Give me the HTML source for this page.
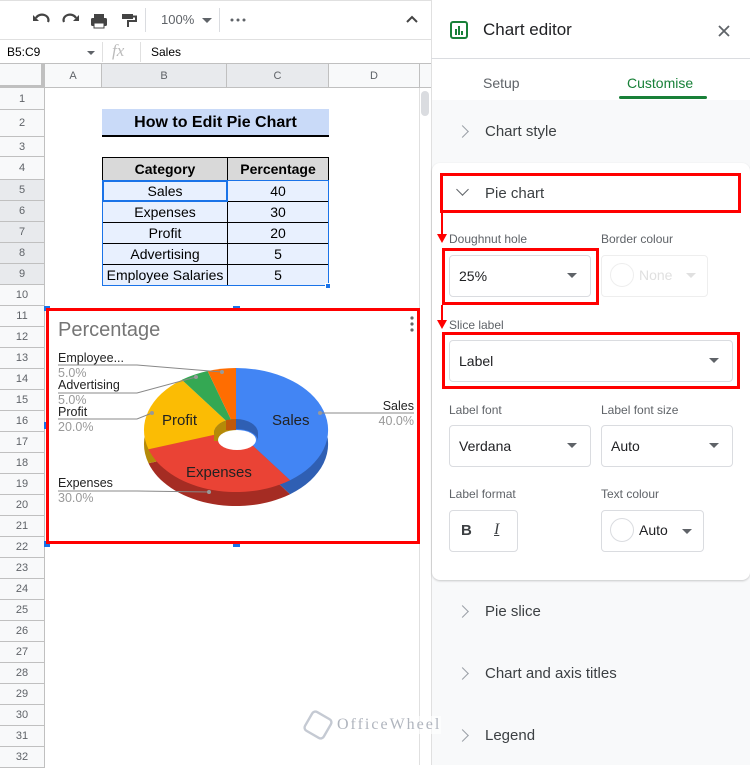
<!DOCTYPE html>
<html><head><meta charset="utf-8"><style>
*{margin:0;padding:0;box-sizing:border-box}
body{width:750px;height:765px;overflow:hidden;background:#fff;font-family:"Liberation Sans",Arial,sans-serif;position:relative}
.a{position:absolute}
.rh{position:absolute;left:0;width:45px;background:#f8f9fa;border-bottom:1px solid #c0c0c0;border-right:1px solid #c0c0c0;color:#5f6368;font-size:11px;text-align:center}
.cell{position:absolute;border:1px solid #000;font-size:14px;text-align:center;line-height:20px;background:#e8f0fe;color:#000}
.lbl{position:absolute;font-size:12px;color:#5f6368}
.box{position:absolute;border:1px solid #dadce0;border-radius:4px;background:#fff;font-size:14px;color:#202124;padding-left:9px}
.dd{position:absolute;width:0;height:0;border-left:5px solid transparent;border-right:5px solid transparent;border-top:5px solid #5f6368}
.sec{position:absolute;left:485px;font-size:15px;color:#3c4043}
.chev{position:absolute;left:458px;width:9px;height:9px;border-right:1.5px solid #9aa0a6;border-top:1.5px solid #9aa0a6;transform:rotate(45deg)}
.red{position:absolute;border:3px solid #f00}
</style></head><body>
<!-- toolbar -->
<div class="a" style="left:0;top:0;width:431px;height:40px;border-bottom:1px solid #e0e0e0;border-top:1px solid #e0e0e0"></div>
<svg class="a" style="left:30px;top:10px" width="120" height="20" viewBox="0 0 120 20">
<path d="M6 8 A6 5 0 0 1 18 12" fill="none" stroke="#444" stroke-width="2.2"/><path d="M3 5 L3 11 L9 11 Z" fill="#444"/>
<path d="M46 8 A6 5 0 0 0 34 12" fill="none" stroke="#444" stroke-width="2.2"/><path d="M49 5 L49 11 L43 11 Z" fill="#444"/>
<rect x="61" y="8" width="16" height="8" rx="1.5" fill="#444"/><rect x="64" y="4" width="10" height="4" fill="#444"/><rect x="64" y="13" width="10" height="5" fill="#fff" stroke="#444" stroke-width="1"/>
<rect x="92" y="4" width="11" height="5" fill="#444"/><path d="M103 6.5 H106 V11 H98 V17" fill="none" stroke="#444" stroke-width="2"/>
</svg>
<div class="a" style="left:145px;top:8px;width:1px;height:24px;background:#dadce0"></div>
<div class="a" style="left:161px;top:12px;font-size:13px;color:#5f6368">100%</div>
<div class="dd" style="left:202px;top:18px"></div>
<div class="a" style="left:219px;top:8px;width:1px;height:24px;background:#dadce0"></div>
<svg class="a" style="left:230px;top:18px" width="16" height="4"><circle cx="2" cy="2" r="1.5" fill="#5f6368"/><circle cx="8" cy="2" r="1.5" fill="#5f6368"/><circle cx="14" cy="2" r="1.5" fill="#5f6368"/></svg>
<svg class="a" style="left:405px;top:14px" width="14" height="10"><path d="M2 8 L7 3 L12 8" fill="none" stroke="#444" stroke-width="2"/></svg>
<!-- formula bar -->
<div class="a" style="left:0;top:40px;width:431px;height:24px;border-bottom:1px solid #c0c0c0"></div>
<div class="a" style="left:7px;top:45px;font-size:12px;color:#000">B5:C9</div>
<div class="dd" style="left:87px;top:51px;border-width:4px 4px 0 4px"></div>
<div class="a" style="left:102px;top:42px;width:1px;height:20px;background:#e0e0e0"></div>
<div class="a" style="left:112px;top:41px;font-size:17px;color:#bbb;font-style:italic;font-family:'Liberation Serif',serif">fx</div>
<div class="a" style="left:140px;top:42px;width:1px;height:20px;background:#e0e0e0"></div>
<div class="a" style="left:151px;top:45px;font-size:12px;color:#000">Sales</div>
<!-- column headers -->
<div class="a" style="left:0;top:64px;width:45px;height:25px;background:#f8f9fa;border-right:4px solid #c0c0c0;border-bottom:4px solid #c0c0c0"></div>
<div class="a" style="left:45px;top:64px;width:57px;height:24px;background:#f8f9fa;border-right:1px solid #c0c0c0;border-bottom:1px solid #c0c0c0;font-size:11px;color:#5f6368;text-align:center;line-height:24px">A</div>
<div class="a" style="left:102px;top:64px;width:125px;height:24px;background:#e8eaed;border-right:1px solid #c0c0c0;border-bottom:1px solid #c0c0c0;font-size:11px;color:#5f6368;text-align:center;line-height:24px">B</div>
<div class="a" style="left:227px;top:64px;width:102px;height:24px;background:#e8eaed;border-right:1px solid #c0c0c0;border-bottom:1px solid #c0c0c0;font-size:11px;color:#5f6368;text-align:center;line-height:24px">C</div>
<div class="a" style="left:329px;top:64px;width:91px;height:24px;background:#f8f9fa;border-right:1px solid #c0c0c0;border-bottom:1px solid #c0c0c0;font-size:11px;color:#5f6368;text-align:center;line-height:24px">D</div>
<div class="a" style="left:420px;top:64px;width:11px;height:24px;background:#f8f9fa;border-bottom:1px solid #c0c0c0"></div>
<!-- scrollbar -->
<div class="a" style="left:419px;top:88px;width:1px;height:677px;background:#e0e0e0"></div>
<div class="a" style="left:421px;top:91px;width:8px;height:25px;border-radius:4px;background:#dadce0"></div>
<!-- row headers -->
<div class="rh" style="top:88px;height:22px;line-height:22px">1</div>
<div class="rh" style="top:110px;height:27px;line-height:27px">2</div>
<div class="rh" style="top:137px;height:20px;line-height:20px">3</div>
<div class="rh" style="top:157px;height:23px;line-height:23px">4</div>
<div class="rh" style="top:180px;height:21px;line-height:21px;background:#e8eaed">5</div>
<div class="rh" style="top:201px;height:21px;line-height:21px;background:#e8eaed">6</div>
<div class="rh" style="top:222px;height:21px;line-height:21px;background:#e8eaed">7</div>
<div class="rh" style="top:243px;height:21px;line-height:21px;background:#e8eaed">8</div>
<div class="rh" style="top:264px;height:21px;line-height:21px;background:#e8eaed">9</div>
<div class="rh" style="top:285px;height:21px;line-height:21px">10</div>
<div class="rh" style="top:306px;height:21px;line-height:21px">11</div>
<div class="rh" style="top:327px;height:21px;line-height:21px">12</div>
<div class="rh" style="top:348px;height:21px;line-height:21px">13</div>
<div class="rh" style="top:369px;height:21px;line-height:21px">14</div>
<div class="rh" style="top:390px;height:21px;line-height:21px">15</div>
<div class="rh" style="top:411px;height:21px;line-height:21px">16</div>
<div class="rh" style="top:432px;height:21px;line-height:21px">17</div>
<div class="rh" style="top:453px;height:21px;line-height:21px">18</div>
<div class="rh" style="top:474px;height:21px;line-height:21px">19</div>
<div class="rh" style="top:495px;height:21px;line-height:21px">20</div>
<div class="rh" style="top:516px;height:21px;line-height:21px">21</div>
<div class="rh" style="top:537px;height:21px;line-height:21px">22</div>
<div class="rh" style="top:558px;height:21px;line-height:21px">23</div>
<div class="rh" style="top:579px;height:21px;line-height:21px">24</div>
<div class="rh" style="top:600px;height:21px;line-height:21px">25</div>
<div class="rh" style="top:621px;height:21px;line-height:21px">26</div>
<div class="rh" style="top:642px;height:21px;line-height:21px">27</div>
<div class="rh" style="top:663px;height:21px;line-height:21px">28</div>
<div class="rh" style="top:684px;height:21px;line-height:21px">29</div>
<div class="rh" style="top:705px;height:21px;line-height:21px">30</div>
<div class="rh" style="top:726px;height:21px;line-height:21px">31</div>
<div class="rh" style="top:747px;height:21px;line-height:21px">32</div>
<!-- title -->
<div class="a" style="left:102px;top:109px;width:227px;height:28px;background:#c9daf8;border-bottom:2px solid #000;font-size:16px;font-weight:bold;text-align:center;line-height:27px">How to Edit Pie Chart</div>
<!-- table -->
<div class="cell" style="left:102px;top:157px;width:126px;height:24px;line-height:22px;background:#d9d9d9;font-weight:bold">Category</div>
<div class="cell" style="left:227px;top:157px;width:102px;height:24px;line-height:22px;background:#d9d9d9;font-weight:bold">Percentage</div>
<div class="cell" style="left:102px;top:180px;width:126px;height:22px">Sales</div><div class="cell" style="left:227px;top:180px;width:102px;height:22px">40</div>
<div class="cell" style="left:102px;top:201px;width:126px;height:22px">Expenses</div><div class="cell" style="left:227px;top:201px;width:102px;height:22px">30</div>
<div class="cell" style="left:102px;top:222px;width:126px;height:22px">Profit</div><div class="cell" style="left:227px;top:222px;width:102px;height:22px">20</div>
<div class="cell" style="left:102px;top:243px;width:126px;height:22px">Advertising</div><div class="cell" style="left:227px;top:243px;width:102px;height:22px">5</div>
<div class="cell" style="left:102px;top:264px;width:126px;height:22px">Employee Salaries</div><div class="cell" style="left:227px;top:264px;width:102px;height:22px">5</div>
<div class="a" style="left:102px;top:180px;width:227px;height:106px;border:1px solid #1a73e8"></div>
<div class="a" style="left:102px;top:180px;width:126px;height:22px;border:2px solid #1a73e8"></div>
<div class="a" style="left:325px;top:283px;width:6px;height:6px;background:#1a73e8;border:1px solid #fff"></div>
<!-- chart -->
<svg class="a" style="left:44px;top:305px" width="380" height="244" viewBox="44 305 380 244">
<rect x="44" y="306" width="6" height="5" fill="#1a73e8"/><rect x="233" y="306" width="7" height="5" fill="#1a73e8"/>
<rect x="44" y="422" width="4" height="7" fill="#1a73e8"/><rect x="44" y="541" width="6" height="6" fill="#1a73e8"/><rect x="233" y="541" width="7" height="6" fill="#1a73e8"/>
<rect x="47.5" y="309.5" width="371" height="233" fill="#fff" stroke="#f00" stroke-width="3"/>
<text x="58" y="336" font-size="20" fill="#757575" font-family="Liberation Sans">Percentage</text>
<circle cx="412" cy="318" r="1.6" fill="#666"/><circle cx="412" cy="324" r="1.6" fill="#666"/><circle cx="412" cy="330" r="1.6" fill="#666"/>
<g transform="translate(0,14)">
<path d="M236 430 L236 368 A92 62 0 0 1 290.1 480.2 Z" fill="#2f5fb3"/>
<path d="M236 430 L290.1 480.2 A92 62 0 0 1 148.5 449.2 Z" fill="#a52c23"/>
<path d="M236 430 L148.5 449.2 A92 62 0 0 1 181.9 379.8 Z" fill="#b58a08"/>
</g>
<path d="M236 430 L236 368 A92 62 0 0 1 290.1 480.2 Z" fill="#4285f4"/>
<path d="M236 430 L290.1 480.2 A92 62 0 0 1 148.5 449.2 Z" fill="#ea4335"/>
<path d="M236 430 L148.5 449.2 A92 62 0 0 1 181.9 379.8 Z" fill="#fbbc04"/>
<path d="M236 430 L181.9 379.8 A92 62 0 0 1 207.6 371 Z" fill="#34a853"/>
<path d="M236 430 L207.6 371 A92 62 0 0 1 236 368 Z" fill="#ff6d01"/>
<path d="M214 433 A22 14 0 0 1 258 433 L258 441 A22 12 0 0 0 214 441 Z" fill="#2f5fb3"/>
<path d="M214 433 A22 14 0 0 1 236 419 L236 441 L214 441 Z" fill="#b58a08"/>
<path d="M226 420 L236 419 L236 430 L226 430 Z" fill="#c0580a"/>
<ellipse cx="237" cy="440" rx="19" ry="10" fill="#fff"/>
<g font-family="Liberation Sans" font-size="15" fill="#222">
<text x="272" y="425">Sales</text><text x="162" y="425">Profit</text><text x="186" y="477">Expenses</text></g>
<g stroke="#888" stroke-width="1" fill="none">
<path d="M58 365 L137 365 L222 372"/><path d="M58 393 L137 393 L196 377"/><path d="M58 419 L137 419 L152 413"/><path d="M58 491 L137 491 L209 492"/><path d="M320 413 L414 413"/>
</g>
<g fill="#999"><circle cx="222" cy="372" r="2"/><circle cx="196" cy="377" r="2"/><circle cx="152" cy="413" r="2"/><circle cx="209" cy="492" r="2"/><circle cx="320" cy="413" r="2"/></g>
<g font-family="Liberation Sans" font-size="12.5">
<text x="58" y="362" fill="#222">Employee...</text><text x="58" y="377" fill="#999">5.0%</text>
<text x="58" y="389" fill="#222">Advertising</text><text x="58" y="404" fill="#999">5.0%</text>
<text x="58" y="416" fill="#222">Profit</text><text x="58" y="431" fill="#999">20.0%</text>
<text x="58" y="487" fill="#222">Expenses</text><text x="58" y="502" fill="#999">30.0%</text>
<text x="414" y="410" fill="#222" text-anchor="end">Sales</text><text x="414" y="425" fill="#999" text-anchor="end">40.0%</text>
</g>
</svg>
<!-- panel -->
<div class="a" style="left:431px;top:0;width:319px;height:765px;background:#f8f9fa;border-left:1px solid #e0e0e0"></div>
<div class="a" style="left:431px;top:0;width:319px;height:100px;background:#fff;border-left:1px solid #e0e0e0"></div>
<div class="a" style="left:431px;top:58px;width:319px;height:1px;background:#dadce0"></div>
<svg class="a" style="left:450px;top:21px" width="18" height="18"><rect x="1" y="1" width="16" height="16" rx="2" fill="none" stroke="#188038" stroke-width="2"/><rect x="5" y="8" width="2" height="6" fill="#188038"/><rect x="8" y="5" width="2" height="9" fill="#188038"/><rect x="11" y="10" width="2" height="4" fill="#188038"/></svg>
<div class="a" style="left:483px;top:20px;font-size:17px;color:#202124">Chart editor</div>
<svg class="a" style="left:717px;top:24px" width="14" height="14"><path d="M2 2 L12 12 M12 2 L2 12" stroke="#5f6368" stroke-width="1.8"/></svg>
<div class="a" style="left:483px;top:75px;font-size:14px;color:#5f6368">Setup</div>
<div class="a" style="left:627px;top:75px;font-size:14px;color:#188038">Customise</div>
<div class="a" style="left:619px;top:96px;width:88px;height:3px;background:#188038;border-radius:2px"></div>
<div class="chev" style="top:127px"></div><div class="sec" style="top:123px">Chart style</div>
<div class="a" style="left:432px;top:163px;width:318px;height:417px;background:#fff;border-radius:8px;box-shadow:0 1px 2px rgba(0,0,0,.2)"></div>
<div class="a" style="left:458px;top:185px;width:9px;height:9px;border-right:1.5px solid #5f6368;border-bottom:1.5px solid #5f6368;transform:rotate(45deg)"></div>
<div class="sec" style="top:185px">Pie chart</div>
<div class="red" style="left:440px;top:173px;width:301px;height:40px"></div>
<div class="lbl" style="left:449px;top:232px">Doughnut hole</div>
<div class="lbl" style="left:601px;top:232px">Border colour</div>
<div class="box" style="left:449px;top:255px;width:142px;height:42px;line-height:40px">25%</div><div class="dd" style="left:567px;top:273px"></div>
<div class="red" style="left:442px;top:248px;width:157px;height:57px"></div>
<div class="box" style="left:601px;top:255px;width:107px;height:42px;border-color:#eee"></div>
<div class="a" style="left:610px;top:263px;width:24px;height:24px;border:1px solid #eee;border-radius:50%"></div>
<div class="a" style="left:639px;top:267px;font-size:14px;color:#e0e0e0">None</div>
<div class="dd" style="left:686px;top:273px;border-top-color:#e0e0e0"></div>
<div class="lbl" style="left:449px;top:318px">Slice label</div>
<div class="box" style="left:449px;top:340px;width:284px;height:42px;line-height:40px">Label</div><div class="dd" style="left:709px;top:358px"></div>
<div class="red" style="left:442px;top:332px;width:298px;height:57px"></div>
<div class="a" style="left:441px;top:213px;width:2px;height:24px;background:#f00"></div>
<div class="a" style="left:437px;top:234px;border-left:5px solid transparent;border-right:5px solid transparent;border-top:9px solid #f00"></div>
<div class="a" style="left:441px;top:305px;width:2px;height:16px;background:#f00"></div>
<div class="a" style="left:437px;top:320px;border-left:5px solid transparent;border-right:5px solid transparent;border-top:9px solid #f00"></div>
<div class="lbl" style="left:449px;top:403px">Label font</div>
<div class="lbl" style="left:601px;top:403px">Label font size</div>
<div class="box" style="left:449px;top:425px;width:142px;height:42px;line-height:40px">Verdana</div><div class="dd" style="left:567px;top:443px"></div>
<div class="box" style="left:601px;top:425px;width:132px;height:42px;line-height:40px">Auto</div><div class="dd" style="left:709px;top:443px"></div>
<div class="lbl" style="left:449px;top:487px">Label format</div>
<div class="lbl" style="left:601px;top:487px">Text colour</div>
<div class="box" style="left:449px;top:510px;width:69px;height:42px"></div>
<div class="a" style="left:461px;top:522px;font-size:15px;font-weight:bold;color:#3c4043">B</div>
<div class="a" style="left:494px;top:521px;font-size:16px;font-style:italic;font-family:'Liberation Serif',serif;color:#3c4043;text-decoration:underline">I</div>
<div class="box" style="left:601px;top:510px;width:103px;height:42px"></div>
<div class="a" style="left:610px;top:518px;width:24px;height:24px;border:1px solid #dadce0;border-radius:50%"></div>
<div class="a" style="left:639px;top:522px;font-size:14px;color:#202124">Auto</div>
<div class="dd" style="left:682px;top:529px"></div>
<div class="chev" style="top:607px"></div><div class="sec" style="top:603px">Pie slice</div>
<div class="chev" style="top:669px"></div><div class="sec" style="top:665px">Chart and axis titles</div>
<div class="chev" style="top:731px"></div><div class="sec" style="top:727px">Legend</div>
<!-- watermark -->
<div class="a" style="left:303px;top:710px;width:30px;height:30px;border:3px solid #c5cad3;border-radius:6px;transform:rotate(30deg) scale(.8)"></div>
<div class="a" style="left:337px;top:716px;font-family:'Liberation Serif',serif;font-size:16px;color:#b0b5be;letter-spacing:2px;background:rgba(255,255,255,.6)">OfficeWheel</div>
</body></html>
